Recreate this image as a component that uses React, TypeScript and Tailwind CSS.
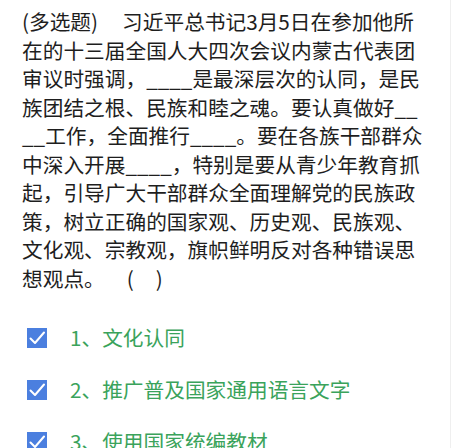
const lines: React.ReactNode[] = [
  <>
    (多选题)<span className="inline-block w-[24px]" />习近平总书记3月5日在参加他所
  </>,
  "在的十三届全国人大四次会议内蒙古代表团",
  "审议时强调，____是最深层次的认同，是民",
  "族团结之根、民族和睦之魂。要认真做好__",
  "__工作，全面推行____。要在各族干部群众",
  "中深入开展____，特别是要从青少年教育抓",
  "起，引导广大干部群众全面理解党的民族政",
  "策，树立正确的国家观、历史观、民族观、",
  "文化观、宗教观，旗帜鲜明反对各种错误思",
  <>
    想观点。<span className="inline-block w-[22px]" />(<span className="inline-block w-[22px]" />)
  </>,
];

const options = ["1、文化认同", "2、推广普及国家通用语言文字", "3、使用国家统编教材"];

function CheckBox() {
  return (
    <span className="flex h-[20px] w-[20px] shrink-0 items-center justify-center bg-[#4b7fdf]">
      <svg viewBox="0 0 20 20" className="h-[20px] w-[20px]" fill="none">
        <path d="M3.5 10.5 L8 15 L17 4.5" stroke="#fff" strokeWidth="2" strokeLinecap="round" strokeLinejoin="round" />
      </svg>
    </span>
  );
}

export default function App() {
  return (
    <div
      className="h-[448px] w-[451px] overflow-hidden bg-white"
      style={{ fontFamily: '"Noto Sans CJK SC", "Noto Sans", sans-serif' }}
    >
      <div className="border-r border-[#efefef] pl-[22px] pt-[7px] pb-[20px] text-[20.7px] leading-[28.5px] text-[#1e1e1e]">
        {lines.map((line, i) => (
          <div key={i} className="whitespace-nowrap">
            {line}
          </div>
        ))}
      </div>
      <div className="border-r border-[#efefef]">
        {options.map((opt) => (
          <div key={opt} className="flex h-[52px] items-center pl-[27px]">
            <CheckBox />
            <span className="ml-[23px] text-[20.7px] text-[#3aa35b]">{opt}</span>
          </div>
        ))}
      </div>
    </div>
  );
}
